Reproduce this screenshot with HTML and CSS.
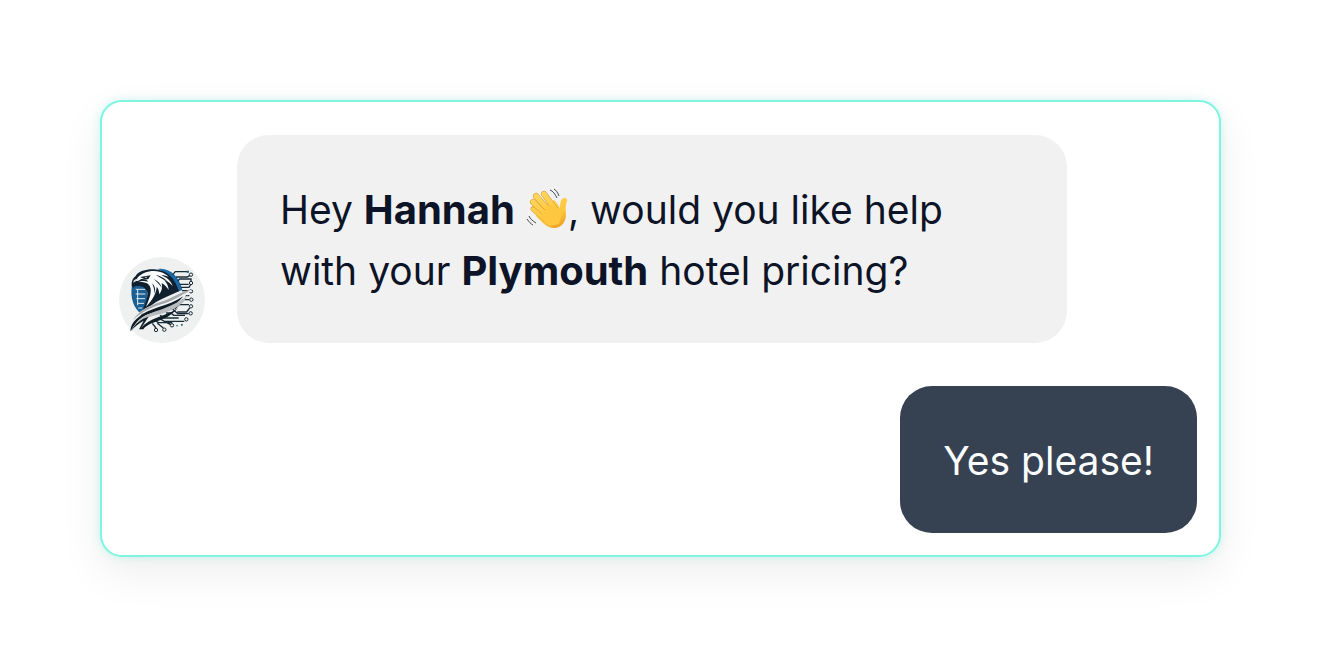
FILE: index.html
```html
<!DOCTYPE html>
<html lang="en">
<head>
    <meta charset="UTF-8">
    <meta name="viewport" content="width=device-width, initial-scale=1.0">
    <title>Chat</title>
    <link rel="stylesheet" href="styles.css">
</head>
<body>
    <main class="chat">
        <!-- Incoming message -->
        <div class="message">
            <svg class="avatar" viewBox="27 25 258 258" role="img" aria-label="Eagle logo">
                <circle cx="156" cy="154" r="129" fill="#eff0f0"/>
                <!-- blue disc -->
                <path d="M66 109h42l6 40-18 48C72 182 59 149 66 109z" fill="#1b5e91"/>
                <path d="M144 61c36-5 65 25 73 63l-15 5c-8-31-27-53-58-68z" fill="#1a69a7"/>
                <path d="M77 122h29M77 136h29M79 150h26M82 164h20M85 178h12M83 122v48" fill="none" stroke="#dcecf4" stroke-width="3"/>
                <!-- circuit board -->
                <g fill="none" stroke="#172c38" stroke-width="4">
                    <path d="M188 78l8-9h39M198 85h34l8-5M203 97l6-6h34v8M209 107h27M213 116h24l6-10M216 126h21M224 141h14M216 153h22M211 164l8-7M194 181l13-13h30M202 190h28l9-12M187 180l16 15h33M168 193h15l8 7h34M150 200l14 8h42M144 207l19 11h60M135 215l10 7h42M127 224l11 14M142 224l18 14M165 219l17 9"/>
                    <g fill="#eff0f0" stroke-width="3">
                        <circle cx="243" cy="78" r="5"/><circle cx="243" cy="103" r="5"/>
                        <circle cx="243" cy="128" r="5"/><circle cx="244" cy="153" r="5"/>
                        <circle cx="243" cy="173" r="5"/><circle cx="242" cy="194" r="5"/>
                        <circle cx="229" cy="212" r="5"/><circle cx="186" cy="230" r="5"/>
                        <circle cx="163" cy="243" r="5"/><circle cx="138" cy="244" r="5"/>
                    </g>
                </g>
                <path d="M230 66h7v6h-7zM199 229h4v4h-4zM213 226h5v5h-5z" fill="#286074"/>
                <!-- head and neck -->
                <path d="M65 112c-1-13 2-23 12-30 8-14 26-18 45-20 46-4 73 25 85 66l-37 16c-31 13-53 28-77 55 10-28 22-52 19-68-4-14-17-20-30-19-6 0-11 2-12 6z" fill="#11202f"/>
                <path d="M82 88c16-19 45-25 69-18 10 3 19 8 25 15-9-4-15-5-22-5 18 7 28 17 34 32-9-10-17-15-25-17 8 9 12 18 13 29-7-10-13-17-21-20 3 12 1 22-7 33-1-10-3-17-8-23-1 17-8 35-32 60 16-36 18-54 9-65-8-9-21-10-33-8 9-5 21-5 30-2-2-7-11-9-20-8l-10 5c-5-7-2-9-2-8z" fill="#fafcfc"/>
                <path d="M80 90c-7 2-11 7-10 12 5-5 10-6 17-5z" fill="#dfe5e8"/>
                <path d="M91 85l31-5-7 11c-7 3-14 1-24-6z" fill="#13212e"/>
                <path d="M103 86l9-2-3 4z" fill="#fff"/>
                <path d="M69 104c15-4 29-3 42 2l-5 3c-13-3-22-2-34 0zM137 78c20 6 30 13 37 23-14-9-24-15-37-23zM131 91c14 6 21 15 25 27-10-13-17-20-25-27zM126 104c10 9 11 20 8 31-1-14-4-22-8-31z" fill="#11202f"/>
                <!-- wing blades -->
                <path d="M65 218c23-35 55-48 91-58 29-9 54-28 91-38-22 26-54 43-91 50-39 8-67 23-91 46z" fill="#f7f8f8"/>
                <path d="M67 215c24-35 60-47 95-59 27-10 48-26 79-33-22 20-53 36-79 42-36 10-67 25-95 50z" fill="#a6a9ac"/>
                <path d="M76 208c30-24 61-35 91-45 22-8 46-21 64-33-24 28-51 36-73 42-31 9-55 18-82 36z" fill="#f1f3f4"/>
                <path d="M83 208c33-32 90-33 137-65-24 31-55 39-87 48-27 7-46 14-72 57 1-17 9-30 22-40z" fill="#101b25"/>
                <path d="M82 220c30-36 94-32 153-82-25 41-60 52-93 60-27 7-46 13-60 22z" fill="#b9bcbe"/>
                <path d="M61 249c15-25 32-39 55-45l-24 36c26-36 76-35 112-63-26 33-57 37-79 47-14 6-20 11-25 18H87l14-26c-16 8-27 18-40 33z" fill="#101e27"/>
            </svg>
            <p class="bubble bubble-in">
                Hey <strong>Hannah</strong>
                <svg class="wave" viewBox="0 0 42 42" role="img" aria-label="waving hand">
                    <defs>
                        <linearGradient id="skin" gradientUnits="userSpaceOnUse" x1="14" y1="6" x2="30" y2="41">
                            <stop offset="0" stop-color="#ffd65c"/>
                            <stop offset="0.65" stop-color="#fdc63d"/>
                            <stop offset="1" stop-color="#ee9f20"/>
                        </linearGradient>
                    </defs>
                    <!-- palm and thumb -->
                    <path d="M14 20l14-8c3 2 4 5 6 8 0-3 0-7 2-9s6-1 5 2c-2 5-1 9-1 14 0 7-5 13-12 13-5 0-9-3-13-7l-5-5z" fill="url(#skin)"/>
                    <!-- fingers -->
                    <g fill="none" stroke-linecap="round">
                        <path d="M18 6l11 15" stroke="#dc9427" stroke-width="6"/>
                        <path d="M18 6l11 15" stroke="url(#skin)" stroke-width="5"/>
                        <path d="M10 8l14 16" stroke="#dc9427" stroke-width="6"/>
                        <path d="M10 8l14 16" stroke="url(#skin)" stroke-width="5"/>
                        <path d="M7 14l14 14" stroke="#dc9427" stroke-width="6"/>
                        <path d="M7 14l14 14" stroke="url(#skin)" stroke-width="5"/>
                        <path d="M7 21l11 10" stroke="#dc9427" stroke-width="5"/>
                        <path d="M7 21l11 10" stroke="url(#skin)" stroke-width="4"/>
                    </g>
                    <path d="M22 17l8 1 6 8-3 10-10 2-9-8z" fill="#fdc740"/>
                    <path d="M24 2c3 1 5 4 7 8M28 1c2 1 4 4 5 7M3 28c1 3 4 5 7 7M1 31c2 3 4 5 6 6" fill="none" stroke="#444a51" stroke-width="1"/>
                </svg>, would you like help with your <strong>Plymouth</strong> hotel pricing?
            </p>
        </div>

        <!-- Reply -->
        <div class="message message-out">
            <p class="bubble bubble-out">Yes please!</p>
        </div>
    </main>
</body>
</html>
```

FILE: styles.css
```css
* {
    box-sizing: border-box;
}
body {
    margin: 0;
    padding: 100px;
    min-height: 100vh;
    background: #fff;
    color: #0d1427;
    font-family: Inter, "Liberation Sans", sans-serif;
    font-size: 39px;
    line-height: 61px;
}
.chat {
    display: flex;
    flex-direction: column;
    gap: 43px;
    padding: 33px 22px 22px 17px;
    background: #fff;
    border: 2px solid #7df5e0;
    border-radius: 22px;
    box-shadow: 0 0 8px rgba(100, 240, 215, 0.3), 0 16px 44px rgba(0, 0, 0, 0.07);
}
.message {
    display: flex;
    align-items: flex-end;
    gap: 32px;
}
.message-out {
    justify-content: flex-end;
}
.avatar {
    flex: none;
    width: 86px;
    height: 86px;
}
.bubble {
    margin: 0;
    padding: 44px 43px 42px;
    border-radius: 32px;
}
.bubble-in {
    width: 77%;
    background: #f1f1f1;
}
.bubble-out {
    background: #364152;
    color: #fbfdff;
}
.wave {
    width: 42px;
    height: 42px;
    vertical-align: -6px;
}
strong {
    font-size: 40px;
    font-weight: 700;
    line-height: 1;
}
```
